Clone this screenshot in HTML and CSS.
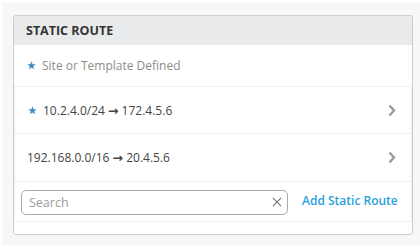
FILE: index.html
```html
<!DOCTYPE html>
<html lang="en">
<head>
  <meta charset="UTF-8">
  <title>Static Route</title>
  <link rel="stylesheet" href="styles.css">
</head>
<body>
  <div class="page">
    <div class="card">
      <div class="card-header">STATIC ROUTE</div>
      <div class="legend">
        <svg class="star" viewBox="0 0 10 10"><path d="M5 0.4 6.2 3.6 9.6 3.7 6.9 5.8 7.9 9.2 5 7.2 2.1 9.2 3.1 5.8 0.4 3.7 3.8 3.6Z"/></svg>
        <span>Site or Template Defined</span>
      </div>
      <div class="route-list">
        <div class="route">
          <svg class="star" viewBox="0 0 10 10"><path d="M5 0.4 6.2 3.6 9.6 3.7 6.9 5.8 7.9 9.2 5 7.2 2.1 9.2 3.1 5.8 0.4 3.7 3.8 3.6Z"/></svg>
          <span class="route-text">10.2.4.0/24 <span class="arrow">→</span> 172.4.5.6</span>
          <svg class="chevron" viewBox="0 0 8 13"><path d="M1.5 1.5 6 6.5 1.5 11.5"/></svg>
        </div>
        <div class="route">
          <span class="route-text">192.168.0.0/16 <span class="arrow">→</span> 20.4.5.6</span>
          <svg class="chevron" viewBox="0 0 8 13"><path d="M1.5 1.5 6 6.5 1.5 11.5"/></svg>
        </div>
        <div class="list-footer">
          <div class="search">
            <input type="text" placeholder="Search">
            <svg class="clear" viewBox="0 0 11 11"><path d="M1 1 10 10M10 1 1 10"/></svg>
          </div>
          <a class="add-link" href="#">Add Static Route</a>
        </div>
      </div>
    </div>
  </div>
</body>
</html>
```

FILE: styles.css
```css
body {
  margin: 0;
  font-family: "Open Sans", "Liberation Sans", sans-serif;
  background-color: #fff;
}
.page {
  margin: 2px 0 0 2px;
  padding: 13px 7px 10px 11px;
  background-color: #f7f7f7;
}
.card {
  width: 398px;
  background-color: #fff;
  border: 1px solid #cdcdcd;
  border-radius: 3px;
  padding-bottom: 12px;
}
.card-header {
  height: 29px;
  line-height: 29px;
  padding-left: 12px;
  background-color: #e9eaeb;
  font-size: 12.5px;
  font-weight: 700;
  color: #333;
  border-radius: 2px 2px 0 0;
}
.legend {
  display: flex;
  align-items: center;
  height: 41px;
  padding-left: 13px;
  font-size: 12px;
  color: #8c8c8c;
}
.star {
  width: 9px;
  height: 9px;
  fill: #3b8cc4;
  margin-right: 6px;
  flex-shrink: 0;
}
.route-list {
  border: 1px solid #efefef;
}
.route {
  display: flex;
  align-items: center;
  height: 46px;
  padding: 0 15px 0 12px;
  border-bottom: 1px solid #efefef;
  font-size: 12px;
  color: #444;
}
.route + .route {
  height: 47px;
}
.route .star {
  margin-left: 1px;
}
.route-text {
  flex: 1;
}
.arrow {
  font-family: "DejaVu Sans", sans-serif;
  font-size: 12.5px;
  font-weight: 700;
}
.chevron {
  width: 8px;
  height: 13px;
  fill: none;
  stroke: #9a9a9a;
  stroke-width: 2.4;
}
.list-footer {
  display: flex;
  align-items: center;
  height: 37px;
  padding: 2px 0 0 6px;
}
.search {
  position: relative;
  width: 267px;
}
.search input {
  box-sizing: border-box;
  width: 100%;
  height: 25px;
  padding: 0 24px 0 7px;
  border: 1px solid #a9a9a9;
  border-radius: 5px;
  font-family: inherit;
  font-size: 12.5px;
  color: #444;
  outline: none;
}
.search input::placeholder {
  color: #9b9b9b;
}
.clear {
  position: absolute;
  right: 6px;
  top: 7px;
  width: 10px;
  height: 10px;
  stroke: #777;
  stroke-width: 1.2;
}
.add-link {
  margin-left: 14px;
  font-size: 12px;
  font-weight: 600;
  color: #2a9fe0;
  text-decoration: none;
  margin-top: -4px;
}
```
